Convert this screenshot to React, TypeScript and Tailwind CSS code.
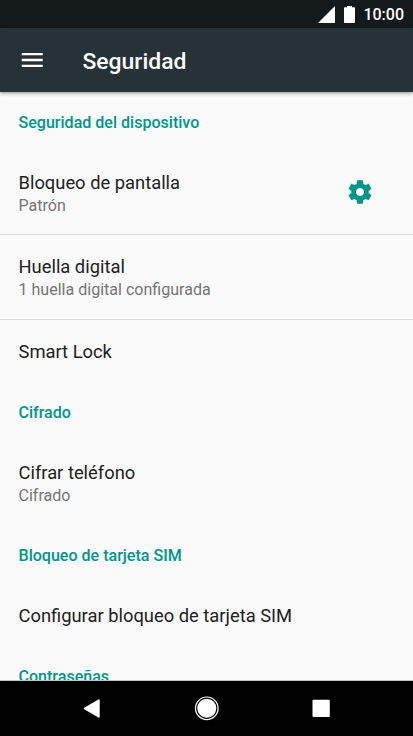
import React from "react";

interface PreferenceProps {
  title: string;
  summary?: string;
  divider?: boolean;
  onSettings?: () => void;
}

function StatusBar() {
  return (
    <div className="flex h-[28px] shrink-0 items-center justify-end bg-[#14191c] pr-[9px] text-white">
      <svg className="mr-[9px] h-[17px] w-[17px]" viewBox="0 0 17 17" fill="currentColor" aria-hidden="true">
        <path d="M0 17 17 0v17z" />
      </svg>
      <svg className="mr-[8px] h-[17px] w-[11px]" viewBox="0 0 11 17" fill="currentColor" aria-hidden="true">
        <path d="M3 0h5v1.2h2.2q.8 0 .8.8v14.200q0 .8-.8.8H.8q-.8 0-.8-.8V2q0-.8.8-.8H3z" />
      </svg>
      <span className="pt-[2px] text-[16px] leading-[28px] font-medium">10:00</span>
    </div>
  );
}

function AppBar() {
  return (
    <header className="relative flex h-[64px] shrink-0 items-center bg-[#263238] text-white shadow-[0_1px_4px_rgba(0,0,0,0.45)]">
      <button aria-label="Menú" className="ml-[18px] h-[28px] w-[28px]">
        <svg className="h-[28px] w-[28px]" viewBox="0 0 24 24" fill="currentColor">
          <path d="M3.200 18h18v-2h-18v2zm0-5h18v-2h-18v2zm0-7v2h18V6h-18z" />
        </svg>
      </button>
      <h1 className="ml-[36.5px] pt-[3px] text-[22.9px] leading-[28px] font-medium">Seguridad</h1>
    </header>
  );
}

function Category({ children }: { children: React.ReactNode }) {
  return (
    <h2 className="flex h-[59.5px] shrink-0 items-center px-[18.5px] pt-[4px] text-[16.06px] font-medium text-[#009688]">
      {children}
    </h2>
  );
}

function Preference({ title, summary, divider, onSettings }: PreferenceProps) {
  const height = summary ? (divider ? "h-[84.7px]" : "h-[83.5px]") : "h-[61.5px]";

  return (
    <div
      className={`flex shrink-0 items-center px-[18.5px] ${height} ${
        divider ? "border-b border-[#dadada]" : ""
      }`}
    >
      <div className={`flex-1 ${summary ? "pt-[2.5px]" : "pt-[2px]"}`}>
        <p className="text-[18.35px] leading-[23px] text-[#212121]">{title}</p>
        {summary && <p className="text-[16.06px] leading-[23px] text-[#757575]">{summary}</p>}
      </div>
      {onSettings && (
        <button aria-label="Ajustes" onClick={onSettings} className="mr-[20.5px] h-[28px] w-[28px] text-[#009688]">
          <svg className="h-[28px] w-[28px]" viewBox="0 0 24 24" fill="currentColor">
            <path d="M19.430 12.980c.04-.32.070-.64.070-.98s-.03-.66-.07-.98l2.110-1.650c.19-.15.240-.42.120-.64l-2-3.460c-.12-.22-.39-.3-.61-.22l-2.490 1c-.52-.4-1.080-.73-1.690-.98l-.38-2.650C14.460 2.180 14.250 2 14 2h-4c-.25 0-.46.18-.49.42l-.38 2.650c-.61.25-1.170.59-1.690.98l-2.490-1c-.23-.09-.49 0-.61.220l-2 3.460c-.13.22-.07.49.120.640l2.110 1.650c-.04.32-.07.65-.07.98s.03.66.070.98l-2.110 1.650c-.19.15-.24.42-.12.64l2 3.460c.12.22.390.3.610.220l2.490-1c.52.4 1.080.73 1.690.98l.38 2.650c.03.24.240.420.490.420h4c.25 0 .46-.18.49-.42l.38-2.650c.61-.25 1.170-.59 1.690-.98l2.490 1c.23.09.49 0 .61-.22l2-3.460c.12-.22.07-.49-.12-.64l-2.110-1.650zM12 15.500c-1.930 0-3.500-1.570-3.500-3.500s1.570-3.500 3.500-3.500 3.500 1.570 3.500 3.500-1.570 3.500-3.500 3.500z" />
          </svg>
        </button>
      )}
    </div>
  );
}

function NavigationBar() {
  return (
    <nav className="flex h-[55px] shrink-0 items-center justify-center gap-[86.5px] bg-black pb-px text-white">
      <button aria-label="Atrás" className="h-[28px] w-[28px]">
        <svg className="h-[28px] w-[28px]" viewBox="0 0 28 28" fill="currentColor">
          <path d="M6.200 13.800 20.400 5.500q1.300-.6 1.300.7v16.600q0 1.300-1.300.7L6.200 15.200q-1.200-.7 0-1.400z" />
        </svg>
      </button>
      <button aria-label="Inicio" className="h-[28px] w-[28px]">
        <svg className="h-[28px] w-[28px]" viewBox="0 0 28 28">
          <circle cx="13.800" cy="14.300" r="11.300" fill="none" stroke="currentColor" strokeWidth="1.200" />
          <circle cx="13.800" cy="14.300" r="9.500" fill="currentColor" />
        </svg>
      </button>
      <button aria-label="Recientes" className="h-[28px] w-[28px]">
        <svg className="h-[28px] w-[28px]" viewBox="0 0 28 28" fill="currentColor">
          <rect x="5.500" y="5.700" width="17.300" height="17.300" rx="1" />
        </svg>
      </button>
    </nav>
  );
}

export default function App() {
  const handleSettingsClick = (): void => {};

  return (
    <div className="flex h-screen w-full flex-col overflow-hidden bg-[#fafafa] font-[Roboto,sans-serif]">
      <StatusBar />
      <AppBar />
      <main className="flex min-h-0 flex-1 flex-col overflow-hidden border-b border-[#c4c4c4]">
        <div className="-mt-[1px] flex flex-col">
          <Category>Seguridad del dispositivo</Category>
          <Preference
            title="Bloqueo de pantalla"
            summary="Patrón"
            divider
            onSettings={handleSettingsClick}
          />
          <Preference title="Huella digital" summary="1 huella digital configurada" divider />
          <Preference title="Smart Lock" />
          <Category>Cifrado</Category>
          <Preference title="Cifrar teléfono" summary="Cifrado" />
          <Category>Bloqueo de tarjeta SIM</Category>
          <Preference title="Configurar bloqueo de tarjeta SIM" />
          <Category>Contraseñas</Category>
        </div>
      </main>
      <NavigationBar />
    </div>
  );
}
